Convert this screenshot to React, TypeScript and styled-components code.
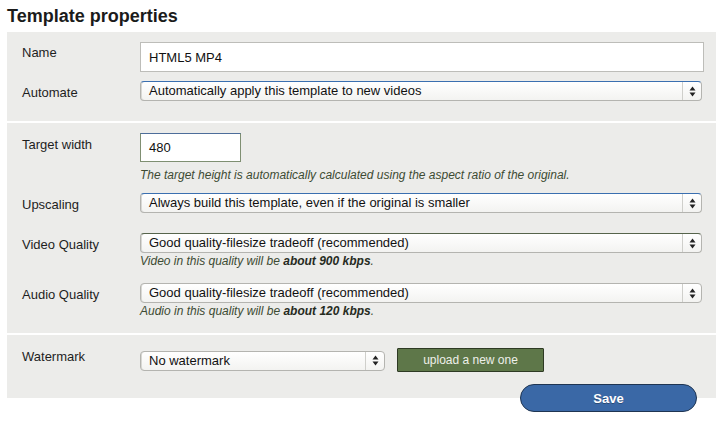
import React from "react";
import styled, { createGlobalStyle } from "styled-components";

const GlobalStyle = createGlobalStyle`
  body {
    margin: 0;
    background: #ffffff;
    font-family: "Liberation Sans", Arial, Helvetica, sans-serif;
  }
`;

const Page = styled.div`
  padding: 6px 9px 0 7px;
`;

const Title = styled.h2`
  margin: 0 0 6px 0;
  font-size: 18px;
  line-height: 20px;
  font-weight: bold;
  color: #1b1b1b;
`;

const Panel = styled.div`
  background: #ececea;
`;

const Section = styled.div<{ $top: number; $bottom: number }>`
  padding: ${(p) => p.$top}px 12px ${(p) => p.$bottom}px 15px;
  & + & {
    border-top: 2px solid #ffffff;
  }
`;

const Row = styled.div<{ $after?: number }>`
  display: grid;
  grid-template-columns: 118px 1fr;
  margin-bottom: ${(p) => p.$after ?? 0}px;
`;

const Label = styled.div<{ $pad?: number }>`
  font-size: 13px;
  line-height: 16px;
  color: #1e1e1e;
  padding-top: ${(p) => p.$pad ?? 4}px;
`;

const Field = styled.div`
  display: flex;
  flex-direction: column;
  align-items: flex-start;
`;

const TextInput = styled.div<{ $width?: string; $height: number; $border: string; $topBorder?: string }>`
  box-sizing: border-box;
  width: ${(p) => p.$width ?? "100%"};
  height: ${(p) => p.$height}px;
  background: #ffffff;
  border: 1px solid ${(p) => p.$border};
  border-top-color: ${(p) => p.$topBorder ?? p.$border};
  padding: 0 8px;
  display: flex;
  align-items: center;
  font-size: 13px;
  color: #111;
`;

const SelectBox = styled.div<{ $width?: string; $accent?: string }>`
  box-sizing: border-box;
  width: ${(p) => p.$width ?? "calc(100% - 2px)"};
  height: 20px;
  border: 1px solid #b4b4b0;
  border-top-color: ${(p) => p.$accent ?? "#b4b4b0"};
  border-radius: 4px;
  background: linear-gradient(#ffffff, #f3f3f1);
  display: flex;
  align-items: stretch;
  font-size: 13px;
  color: #111;
  box-shadow: inset 1px 0 0 #d8d8d4;
`;

const SelectText = styled.div`
  flex: 1;
  padding-left: 8px;
  line-height: 18px;
  white-space: nowrap;
  overflow: hidden;
`;

const Stepper = styled.div`
  width: 18px;
  border-left: 1px solid #cfcfcb;
  display: flex;
  align-items: center;
  justify-content: center;
`;

const Hint = styled.div<{ $gap: number }>`
  margin-top: ${(p) => p.$gap}px;
  font-size: 12px;
  line-height: 14px;
  font-style: italic;
  color: #3d4b33;
  b {
    font-weight: bold;
    color: #262b22;
  }
`;

const WatermarkLine = styled.div`
  display: flex;
  align-items: center;
  gap: 12px;
  width: 100%;
`;

const UploadButton = styled.button`
  box-sizing: border-box;
  width: 147px;
  height: 24px;
  background: #5e7749;
  border: 1px solid #2e3a24;
  border-radius: 1px;
  color: #eef0ea;
  font-family: "Liberation Sans", Arial, sans-serif;
  font-size: 12px;
  padding: 0;
  margin-top: -1px;
`;

const Footer = styled.div`
  display: flex;
  justify-content: flex-end;
  padding-right: 19px;
  margin-top: -14px;
`;

const SaveButton = styled.button`
  box-sizing: border-box;
  width: 177px;
  height: 28px;
  border-radius: 14px;
  background: #3a68a6;
  border: 1px solid #1f3552;
  color: #ffffff;
  font-family: "Liberation Sans", Arial, sans-serif;
  font-weight: bold;
  font-size: 13px;
  text-shadow: 0 1px 0 rgba(0, 0, 0, 0.3);
  padding: 0;
`;

const Arrows = () => (
  <svg width="7" height="11" viewBox="0 0 7 11">
    <path d="M3.5 0.5 L6.5 4.5 L0.5 4.5 Z" fill="#222" />
    <path d="M3.5 10.5 L6.5 6.5 L0.5 6.5 Z" fill="#222" />
  </svg>
);

const Select: React.FC<{ value: string; width?: string; accent?: string }> = ({ value, width, accent }) => (
  <SelectBox $width={width} $accent={accent}>
    <SelectText>{value}</SelectText>
    <Stepper>
      <Arrows />
    </Stepper>
  </SelectBox>
);

export default function App() {
  return (
    <>
      <GlobalStyle />
      <Page>
        <Title>Template properties</Title>
        <Panel>
          <Section $top={10} $bottom={20}>
            <Row $after={9}>
              <Label $pad={3}>Name</Label>
              <Field>
                <TextInput $height={30} $border="#bdbdb9">HTML5 MP4</TextInput>
              </Field>
            </Row>
            <Row>
              <Label>Automate</Label>
              <Field>
                <Select value="Automatically apply this template to new videos" accent="#3a6fb0" />
              </Field>
            </Row>
          </Section>
          <Section $top={10} $bottom={15}>
            <Row $after={11}>
              <Label>Target width</Label>
              <Field>
                <TextInput $width="101px" $height={29} $border="#7f8f72" $topBorder="#4d6d9a">
                  480
                </TextInput>
                <Hint $gap={6}>The target height is automatically calculated using the aspect ratio of the original.</Hint>
              </Field>
            </Row>
            <Row $after={20}>
              <Label>Upscaling</Label>
              <Field>
                <Select value="Always build this template, even if the original is smaller" accent="#3a6fb0" />
              </Field>
            </Row>
            <Row $after={15}>
              <Label>Video Quality</Label>
              <Field>
                <Select value="Good quality-filesize tradeoff (recommended)" accent="#56644c" />
                <Hint $gap={1}>
                  Video in this quality will be <b>about 900 kbps</b>.
                </Hint>
              </Field>
            </Row>
            <Row>
              <Label>Audio Quality</Label>
              <Field>
                <Select value="Good quality-filesize tradeoff (recommended)" />
                <Hint $gap={1}>
                  Audio in this quality will be <b>about 120 kbps</b>.
                </Hint>
              </Field>
            </Row>
          </Section>
          <Section $top={14} $bottom={26}>
            <Row>
              <Label $pad={0}>Watermark</Label>
              <Field>
                <WatermarkLine>
                  <Select value="No watermark" width="245px" />
                  <UploadButton>upload a new one</UploadButton>
                </WatermarkLine>
              </Field>
            </Row>
          </Section>
        </Panel>
        <Footer>
          <SaveButton>Save</SaveButton>
        </Footer>
      </Page>
    </>
  );
}
